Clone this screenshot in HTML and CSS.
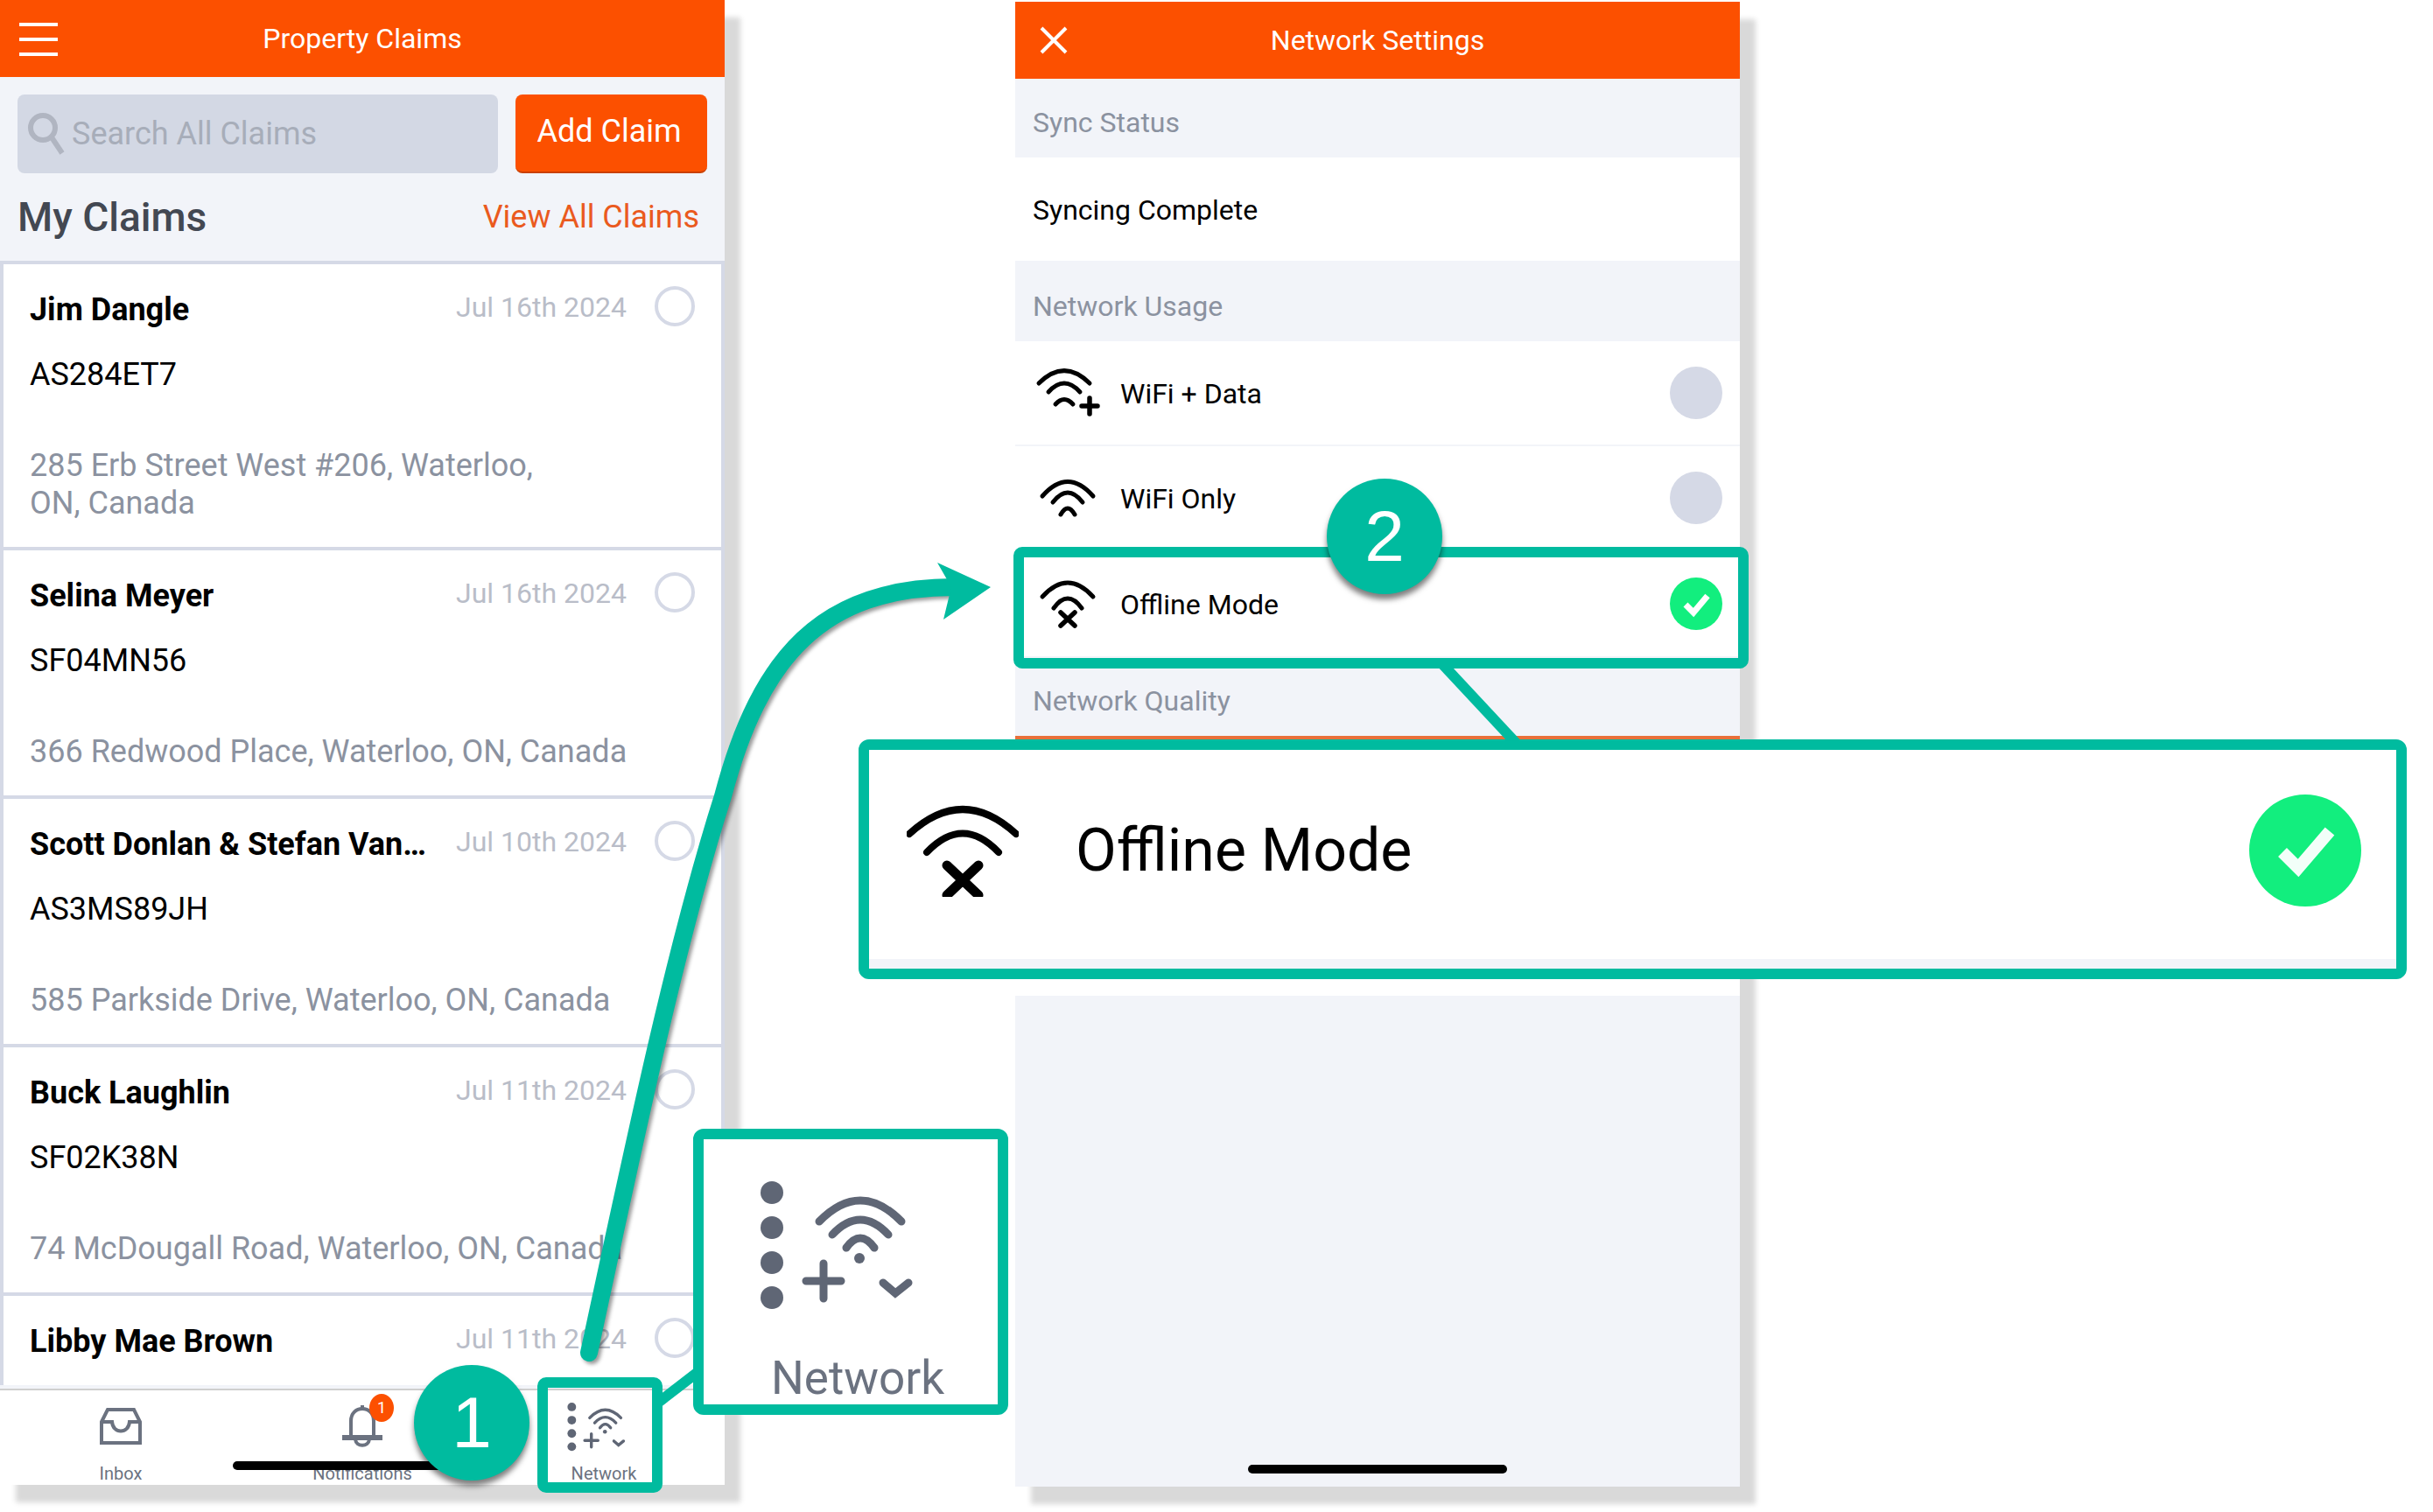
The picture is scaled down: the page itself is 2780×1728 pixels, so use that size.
FILE: index.html
```html
<!DOCTYPE html>
<html lang="en">
<head>
  <meta charset="UTF-8" />
  <title>Network Settings</title>
  <link rel="stylesheet" href="styles.css">
</head>
<body>
  <div class="stage">

    <!-- left phone -->
    <section class="phone">
      <header class="topbar">
        <svg class="topbar-icon menu-icon" viewBox="0 0 46 40"><path d="M1 4H45M1 21H45M1 38H45" /></svg>
        <h1>Property Claims</h1>
      </header>

      <div class="toolbar">
        <div class="search">
          <svg class="search-icon" viewBox="0 0 44 56"><circle cx="19" cy="21" r="14" /><path d="M29 32L41 50" /></svg>
          <span>Search All Claims</span>
        </div>
        <button class="add-btn">Add Claim</button>
      </div>

      <div class="title-row">
        <h2>My Claims</h2>
        <a class="view-all">View All Claims</a>
      </div>

      <div class="claims">
        <article class="claim">
          <div class="claim-top">
            <strong>Jim Dangle</strong>
            <span class="claim-date">Jul 16th 2024</span>
            <i class="radio"></i>
          </div>
          <p class="claim-code">AS284ET7</p>
          <p class="claim-addr">285 Erb Street West #206, Waterloo,<br>ON, Canada</p>
        </article>
        <article class="claim">
          <div class="claim-top">
            <strong>Selina Meyer</strong>
            <span class="claim-date">Jul 16th 2024</span>
            <i class="radio"></i>
          </div>
          <p class="claim-code">SF04MN56</p>
          <p class="claim-addr">366 Redwood Place, Waterloo, ON, Canada</p>
        </article>
        <article class="claim">
          <div class="claim-top">
            <strong>Scott Donlan &amp; Stefan Van…</strong>
            <span class="claim-date">Jul 10th 2024</span>
            <i class="radio"></i>
          </div>
          <p class="claim-code">AS3MS89JH</p>
          <p class="claim-addr">585 Parkside Drive, Waterloo, ON, Canada</p>
        </article>
        <article class="claim">
          <div class="claim-top">
            <strong>Buck Laughlin</strong>
            <span class="claim-date">Jul 11th 2024</span>
            <i class="radio"></i>
          </div>
          <p class="claim-code">SF02K38N</p>
          <p class="claim-addr">74 McDougall Road, Waterloo, ON, Canada</p>
        </article>
        <article class="claim">
          <div class="claim-top">
            <strong>Libby Mae Brown</strong>
            <span class="claim-date">Jul 11th 2024</span>
            <i class="radio"></i>
          </div>
        </article>
      </div>

      <nav class="tabs">
        <div class="tab">
          <svg class="tab-icon" viewBox="0 0 48 42"><path d="M2 16L9 2H39L46 16V40H2Z" /><path d="M2 16H14C15 30 33 30 34 16H46" /></svg>
          <span>Inbox</span>
        </div>
        <div class="tab">
          <div class="bell-wrap">
            <svg class="tab-icon bell" viewBox="0 0 48 50"><path d="M11 37V19C11 10 17 5 24 5C31 5 37 10 37 19V37" /><path d="M24 1V5" /><path d="M1 38H47" class="thick" /><path d="M16 40C17 49 31 49 32 40" /></svg>
            <b class="bell-badge">1</b>
          </div>
          <span>Notifications</span>
        </div>
        <div class="tab">
          <svg class="net-icon net-icon-small" viewBox="0 0 190 160">
            <circle cx="22" cy="23" r="13" /><circle cx="22" cy="63" r="13" /><circle cx="22" cy="103" r="13" /><circle cx="22" cy="143" r="13" />
            <path d="M76 56Q123 8 170 56M91 71Q123 37 155 71M107 86Q123 64 139 86M61 124H101M81 104V144M149 126L163 138L178 126" />
            <circle cx="122" cy="98" r="6" />
          </svg>
          <span>Network</span>
        </div>
      </nav>
      <div class="home-bar home-bar-left"></div>
    </section>

    <!-- right phone -->
    <section class="phone phone-settings">
      <header class="topbar">
        <svg class="topbar-icon close-icon" viewBox="0 0 32 32"><path d="M2 2L30 30M30 2L2 30" /></svg>
        <h1>Network Settings</h1>
      </header>

      <div class="group-title">Sync Status</div>
      <div class="row row-sync">Syncing Complete</div>

      <div class="group-title group-usage">Network Usage</div>
      <div class="row row-option">
        <svg class="row-icon" viewBox="0 0 80 60"><path d="M7 19Q36 -10 65 19M18 29Q36 9 54 29M26 43Q36 32 46 43" /><path class="heavy" d="M65 36V54M56 45H74" /></svg>
        <span>WiFi + Data</span>
        <i class="toggle"></i>
      </div>
      <div class="row row-option">
        <svg class="row-icon" viewBox="0 0 80 60"><path d="M11 28Q40 -5 69 28M23 35Q40 13 57 35M32 49Q40 35 48 49" /></svg>
        <span>WiFi Only</span>
        <i class="toggle"></i>
      </div>
      <div class="row row-option row-last">
        <svg class="row-icon" viewBox="0 0 80 60"><path d="M11 22Q40 -10 69 22M24 35Q40 13 56 35" /><path class="heavy" d="M32 40L48 55M48 40L32 55" /></svg>
        <span>Offline Mode</span>
        <i class="toggle toggle-on">
          <svg viewBox="0 0 60 60"><path d="M18 31L27 40L43 21" /></svg>
        </i>
      </div>

      <div class="group-title group-quality">Network Quality</div>
      <div class="quality-body"></div>
      <div class="home-bar home-bar-right"></div>
    </section>
  </div>

  <!-- annotations over the two phones -->
  <svg class="lines" viewBox="0 0 2780 1728">
    <path class="arrow-shaft" d="M673 1546C730 1280 775 1070 826 910C868 750 940 671 1090 671" />
    <path class="arrow-head" d="M1071 643L1132 671L1078 708L1087 671Z" />
    <path class="connector" d="M752 1603L800 1566" />
    <path class="connector" d="M1649 760L1733 850" />
  </svg>

  <div class="mark mark-tab"></div>
  <div class="mark mark-row"></div>

  <div class="callout callout-net">
    <svg class="net-icon net-icon-big" viewBox="0 0 190 160">
      <circle cx="22" cy="23" r="13" /><circle cx="22" cy="63" r="13" /><circle cx="22" cy="103" r="13" /><circle cx="22" cy="143" r="13" />
      <path d="M76 56Q123 8 170 56M91 71Q123 37 155 71M107 86Q123 64 139 86M61 124H101M81 104V144M149 126L163 138L178 126" />
      <circle cx="122" cy="98" r="6" />
    </svg>
    <span>Network</span>
  </div>

  <div class="callout callout-row">
    <div class="callout-row-inner">
      <svg class="offline-big" viewBox="0 0 128 106"><path d="M3 34Q64 -22 125 34M23 55Q64 12 105 55" /><path class="heavy" d="M46 70L82 104M82 70L46 104" /></svg>
      <span>Offline Mode</span>
      <i class="check-big">
        <svg viewBox="0 0 128 128"><path d="M38 66L56 84L92 42" /></svg>
      </i>
    </div>
  </div>

  <div class="step step-1">1</div>
  <div class="step step-2">2</div>
</body>
</html>
```

FILE: styles.css
```css
* {
  box-sizing: border-box;
}
body {
  margin: 0;
  background: #fff;
  font-family: 'Roboto', sans-serif;
  color: #000;
  width: 2780px;
  height: 1728px;
  position: relative;
  overflow: hidden;
}
h1, h2, p {
  margin: 0;
  font-weight: normal;
}
.stage {
  display: flex;
  gap: 332px;
}

/* phones */
.phone {
  width: 828px;
  height: 1697px;
  background: #f2f4f9;
  display: flex;
  flex-direction: column;
  position: relative;
  box-shadow: 18px 20px 6px #d9d9d9;
}
.phone-settings {
  margin-top: 2px;
}
.topbar {
  height: 88px;
  flex: none;
  background: #fc5000;
  color: #fff;
  display: flex;
  align-items: center;
  justify-content: center;
  position: relative;
}
.topbar h1 {
  font-size: 32px;
}
.topbar-icon {
  position: absolute;
  fill: none;
  stroke: #fff;
  stroke-width: 4;
}
.menu-icon {
  left: 21px;
  top: 24px;
  width: 46px;
  height: 40px;
}
.close-icon {
  left: 28px;
  top: 28px;
  width: 32px;
  height: 32px;
}

/* search and title */
.toolbar {
  display: flex;
  gap: 20px;
  padding: 20px 20px 0;
}
.search {
  width: 549px;
  height: 90px;
  background: #d3d8e4;
  border-radius: 8px;
  display: flex;
  align-items: center;
  color: #a7adb9;
  font-size: 36px;
  padding-left: 10px;
}
.search-icon {
  width: 44px;
  height: 56px;
  margin-right: 8px;
  fill: none;
  stroke: #b0b5c1;
  stroke-width: 6;
}
.add-btn {
  width: 219px;
  height: 90px;
  border: none;
  border-bottom: 2px solid #c94000;
  border-radius: 8px;
  background: #fc5000;
  color: #fff;
  font-family: inherit;
  font-size: 36px;
  padding: 0 5px 4px 0;
}
.title-row {
  height: 100px;
  flex: none;
  display: flex;
  align-items: center;
  justify-content: space-between;
  padding: 0 29px 0 20px;
}
.title-row h2 {
  font-size: 46px;
  font-weight: 500;
  color: #434852;
}
.view-all {
  font-size: 36px;
  color: #ea5a1e;
}

/* claim list */
.claims {
  flex: 1;
  overflow: hidden;
  min-height: 0;
}
.claim {
  background: #fff;
  border: solid #d5d9e6;
  border-width: 4px 4px 0;
  padding: 30px 30px 28px;
}
.claim-top {
  display: flex;
  align-items: center;
  height: 44px;
}
.claim-top strong {
  flex: 1;
  font-size: 36px;
  font-weight: 700;
  white-space: nowrap;
}
.claim-date {
  font-size: 32px;
  color: #b9bdc8;
  margin-top: -7px;
}
.radio {
  width: 46px;
  height: 46px;
  margin: -8px 0 0 32px;
  border: 4px solid #d5d9e6;
  border-radius: 50%;
}
.claim-code {
  margin-top: 30px;
  font-size: 36px;
  line-height: 44px;
}
.claim-addr {
  margin-top: 61px;
  font-size: 36px;
  line-height: 43px;
  color: #8b92a0;
  white-space: nowrap;
}

/* bottom tabs */
.tabs {
  height: 110px;
  flex: none;
  background: #fff;
  border-top: 2px solid #cfcfcf;
  display: grid;
  grid-template-columns: repeat(3, 1fr);
}
.tab {
  display: flex;
  flex-direction: column;
  align-items: center;
  font-size: 20px;
  color: #6b7280;
  position: relative;
}
.tab > span {
  position: absolute;
  top: 83px;
  line-height: 24px;
}
.tab-icon {
  width: 48px;
  height: 42px;
  margin-top: 20px;
  fill: none;
  stroke: #6b7280;
  stroke-width: 4;
}
.bell-wrap {
  position: relative;
}
.bell {
  height: 50px;
  margin-top: 16px;
}
.bell .thick {
  stroke-width: 6;
}
.bell-badge {
  position: absolute;
  left: 32px;
  top: 4px;
  width: 28px;
  height: 32px;
  border-radius: 50%;
  background: #fc5000;
  color: #fff;
  font-size: 18px;
  font-weight: normal;
  text-align: center;
  line-height: 32px;
}
.net-icon {
  fill: #5f6675;
}
.net-icon path {
  fill: none;
  stroke: #5f6675;
  stroke-width: 9;
  stroke-linecap: round;
}
.net-icon-small {
  width: 72px;
  height: 61px;
  margin: 10px 0 0 -18px;
}
.home-bar {
  position: absolute;
  height: 10px;
  background: #000;
  border-radius: 5px;
}
.home-bar-left {
  left: 266px;
  width: 296px;
  top: 1670px;
}
.home-bar-right {
  left: 266px;
  width: 296px;
  top: 1672px;
}

/* settings rows */
.group-title {
  height: 90px;
  flex: none;
  padding: 10px 0 0 20px;
  display: flex;
  align-items: center;
  font-size: 32px;
  color: #8b92a0;
}
.group-usage {
  height: 92px;
  padding-top: 12px;
}
.row {
  background: #fff;
  flex: none;
  font-size: 32px;
  display: flex;
  align-items: center;
}
.row-sync {
  height: 118px;
  padding: 1px 0 0 20px;
}
.row-option {
  height: 120px;
  padding: 0 20px;
  border-bottom: 2px solid #f2f4f9;
}
.row-last {
  border-bottom: none;
}
.row-option span {
  flex: 1;
  margin: 2px 0 0 20px;
}
.row-icon {
  width: 80px;
  height: 60px;
  overflow: visible;
  fill: none;
  stroke: #000;
  stroke-width: 5;
  stroke-linecap: round;
}
.row-icon .heavy {
  stroke-width: 5.5;
}
.toggle {
  width: 60px;
  height: 60px;
  border-radius: 50%;
  background: #d5d9e6;
}
.toggle-on {
  background: #12ee7e;
}
.toggle-on svg {
  display: block;
  fill: none;
  stroke: #fff;
  stroke-width: 7;
}
.group-quality {
  border-bottom: 5px solid #e8703a;
  height: 96px;
}
.quality-body {
  height: 292px;
  flex: none;
  background: #fff;
}

/* annotations */
.lines {
  position: absolute;
  left: 0;
  top: 0;
  width: 2780px;
  height: 1728px;
}
.arrow-shaft {
  fill: none;
  stroke: #00bb9f;
  stroke-width: 20;
  stroke-linecap: round;
  filter: drop-shadow(3px 3px 2px rgba(0, 0, 0, 0.4));
}
.arrow-head {
  fill: #00bb9f;
}
.connector {
  fill: none;
  stroke: #00bb9f;
  stroke-width: 12;
}
.mark {
  position: absolute;
  border: 12px solid #00bb9f;
  border-radius: 10px;
}
.mark-tab {
  left: 614px;
  top: 1574px;
  width: 143px;
  height: 132px;
}
.mark-row {
  left: 1158px;
  top: 625px;
  width: 840px;
  height: 139px;
}
.callout {
  position: absolute;
  border: 12px solid #00bb9f;
  border-radius: 12px;
  background: #fff;
}
.callout-net {
  left: 792px;
  top: 1290px;
  width: 360px;
  height: 327px;
}
.net-icon-big {
  position: absolute;
  left: 56px;
  top: 38px;
  width: 190px;
  height: 160px;
  filter: blur(0.6px);
}
.callout-net span {
  position: absolute;
  left: 77px;
  top: 243px;
  font-size: 53px;
  line-height: 60px;
  color: #6b7280;
}
.callout-row {
  left: 981px;
  top: 845px;
  width: 1769px;
  height: 274px;
  display: flex;
}
.callout-row-inner {
  flex: 1;
  display: flex;
  align-items: center;
  padding: 0 40px 9px 43px;
  border-bottom: 11px solid #f2f4f9;
}
.offline-big {
  width: 128px;
  height: 106px;
  fill: none;
  stroke: #000;
  stroke-width: 8;
  stroke-linecap: round;
}
.offline-big .heavy {
  stroke-width: 11;
}
.callout-row-inner span {
  flex: 1;
  margin-left: 65px;
  font-size: 68px;
}
.check-big {
  width: 128px;
  height: 128px;
  border-radius: 50%;
  background: #12ee7e;
}
.check-big svg {
  display: block;
  fill: none;
  stroke: #f2fff9;
  stroke-width: 14;
}
.step {
  position: absolute;
  width: 132px;
  height: 132px;
  border-radius: 50%;
  background: #00bb9f;
  color: #fff;
  font-family: 'Liberation Sans', sans-serif;
  font-size: 82px;
  line-height: 132px;
  text-align: center;
  box-shadow: 0 6px 6px rgba(0, 0, 0, 0.5);
}
.step-1 {
  left: 473px;
  top: 1560px;
}
.step-2 {
  left: 1516px;
  top: 547px;
}
```
